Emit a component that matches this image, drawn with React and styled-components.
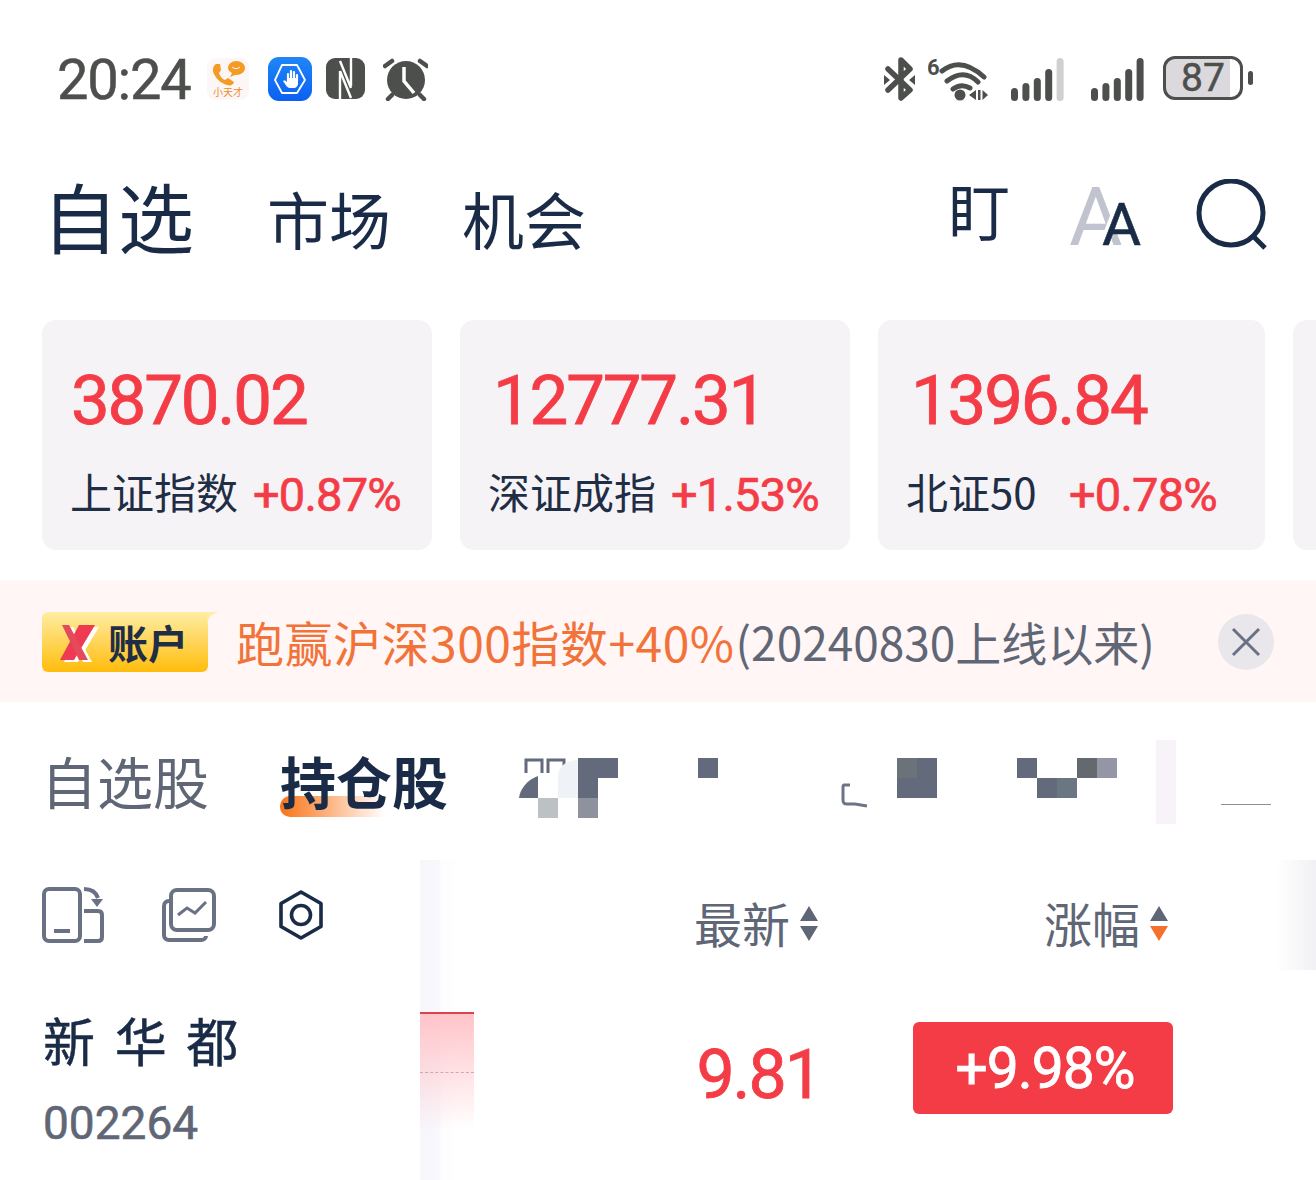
import React from 'react';
import styled, { createGlobalStyle } from 'styled-components';

const CJK = `"Noto Sans CJK SC", "Noto Sans", sans-serif`;
const NUM = `Roboto, "Noto Sans CJK SC", sans-serif`;
const INK = '#1a2b47';
const GREY = '#5f6676';
const RED = '#f43c47';
const STATUS = '#4d4f4d';

const GlobalStyle = createGlobalStyle`
  html, body {
    margin: 0;
    padding: 0;
    background: #fff;
  }
`;

const Screen = styled.div`
  width: 1316px;
  height: 1180px;
  overflow: hidden;
  background: #fff;
  font-family: ${CJK};
  color: ${INK};
`;

const StatusBar = styled.div`
  height: 160px;
  display: flex;
  align-items: center;
  padding: 0 63px 0 57px;
  box-sizing: border-box;
`;

const Time = styled.div`
  font-family: ${NUM};
  font-size: 56px;
  line-height: 60px;
  letter-spacing: -1.2px;
  -webkit-text-stroke: 0.5px ${STATUS};
  color: ${STATUS};
  margin-right: 17px;
`;

const StatusIcon = styled.svg`
  display: block;
  flex: none;
  margin-left: ${(p) => p.$ml || 0}px;
  margin-bottom: 3px;
`;

const Spacer = styled.div`
  flex: 1;
`;

const Battery = styled.div`
  width: 80px;
  height: 44px;
  margin: 0 0 4px 17px;
  box-sizing: border-box;
  border: 3px solid ${STATUS};
  border-radius: 12px;
  background: linear-gradient(to right, #dcd9de 87%, #fff 87%);
  font-family: ${NUM};
  font-size: 39px;
  -webkit-text-stroke: 0.5px ${STATUS};
  line-height: 38px;
  text-align: center;
  color: ${STATUS};
`;

const BatteryCap = styled.div`
  width: 5px;
  height: 14px;
  margin: 0 0 4px 5px;
  border-radius: 3px;
  background: ${STATUS};
`;

const NavBar = styled.div`
  height: 110px;
  margin-bottom: 50px;
  display: flex;
  align-items: center;
  padding: 0 48px 0 50px;
`;

const NavItem = styled.div`
  font-size: ${(p) => (p.$active ? 76 : 62)}px;
  line-height: 90px;
  margin-right: ${(p) => p.$gap}px;
  margin-left: ${(p) => (p.$active ? -8 : 0)}px;
  padding-top: ${(p) => (p.$active ? 0 : 6)}px;
`;

const WatchGlyph = styled.div`
  font-size: 62px;
  line-height: 70px;
  margin-right: 60px;
  margin-top: -12px;
`;

const FontToggle = styled.div`
  position: relative;
  width: 70px;
  height: 70px;
  margin-right: 56px;
  font-family: ${NUM};
`;

const BackA = styled.span`
  position: absolute;
  left: -1px;
  top: -4px;
  font-size: 82px;
  line-height: 82px;
  color: #c1c3ce;
`;

const FrontA = styled.span`
  position: absolute;
  left: 32px;
  top: 15px;
  font-size: 60px;
  line-height: 60px;
  color: ${INK};
  -webkit-text-stroke: 0.5px ${INK};
  text-shadow: -3px 0 0 #fff, -3px -3px 0 #fff, 0 -3px 0 #fff;
`;

const CardRow = styled.div`
  display: flex;
  gap: 28px;
  padding-left: 42px;
  margin-bottom: 30px;
`;

const Card = styled.div`
  flex: none;
  width: ${(p) => p.$width}px;
  height: 230px;
  box-sizing: border-box;
  padding: 46px 0 0 28px;
  background: #f6f3f7;
  border-radius: 14px;
`;

const CardValue = styled.div`
  font-family: ${NUM};
  font-size: 69px;
  line-height: 70px;
  letter-spacing: -2.2px;
  -webkit-text-stroke: 0.8px ${RED};
  color: ${RED};
  margin-left: ${(p) => p.$shift || 0}px;
`;

const CardFoot = styled.div`
  display: flex;
  align-items: center;
  margin-top: 30px;
  height: 50px;
`;

const CardLabel = styled.div`
  font-size: 42px;
  line-height: 44px;
  color: #1f2d45;
  width: ${(p) => p.$width || 165}px;
  white-space: nowrap;
`;

const CardChange = styled.div`
  font-family: ${NUM};
  font-size: 47px;
  line-height: 50px;
  letter-spacing: -0.8px;
  -webkit-text-stroke: 0.7px ${RED};
  color: ${RED};
  margin-left: 18px;
  padding-top: 8px;
`;

const Banner = styled.div`
  height: 122px;
  box-sizing: border-box;
  padding: 2px 0 0 42px;
  background: #fff6f5;
  display: flex;
  align-items: center;
`;

const Badge = styled.div`
  position: relative;
  width: 166px;
  height: 60px;
  border-radius: 6px 0 6px 6px;
  background: linear-gradient(to bottom, #ffeda3, #ffbd0c);
  display: flex;
  align-items: center;
  padding-left: 18px;
  box-sizing: border-box;
  font-size: 40px;
  font-weight: 700;
  color: #1f2d45;
  margin-right: 28px;

  &::after {
    content: '';
    position: absolute;
    right: -11px;
    top: 0;
    width: 12px;
    height: 12px;
    background: radial-gradient(circle at 100% 100%, transparent 11px, #ffeda3 12px);
  }
`;

const BadgeMark = styled.svg`
  display: block;
  flex: none;
  margin-right: 8px;
`;

const Promo = styled.div`
  font-size: 48px;
  line-height: 60px;
  letter-spacing: 0.5px;
  color: #f2733a;
  white-space: nowrap;
  margin-top: -3px;
`;

const PromoNote = styled.div`
  font-size: 46px;
  line-height: 60px;
  color: ${GREY};
  white-space: nowrap;
  margin: -3px 0 0 1px;
`;

const CloseButton = styled.div`
  position: absolute;
  left: 1218px;
  width: 56px;
  height: 56px;
  border-radius: 50%;
  background: #e9e7ec;
  display: flex;
  align-items: center;
  justify-content: center;
`;

const TabRow = styled.div`
  height: 84px;
  margin: 38px 0 36px;
  display: flex;
  align-items: center;
  padding-left: 41px;
`;

const Tab = styled.div`
  position: relative;
  width: ${(p) => p.$width}px;
  font-size: 56px;
  line-height: 80px;
  padding-bottom: 4px;
  white-space: nowrap;
  font-weight: ${(p) => (p.$active ? 700 : 400)};
  color: ${(p) => (p.$active ? INK : GREY)};
  z-index: 0;

  ${(p) =>
    p.$active &&
    `&::after {
      content: '';
      position: absolute;
      left: 0;
      bottom: 7px;
      width: 105px;
      height: 21px;
      border-radius: 10px 0 0 10px;
      background: linear-gradient(to right, #f97316, rgba(249, 115, 22, 0));
      z-index: -1;
    }`}
`;

const Table = styled.div`
  position: relative;
`;

const HeaderRow = styled.div`
  display: grid;
  grid-template-columns: 420px 398px 350px;
  height: 110px;
`;

const ToolCell = styled.div`
  display: flex;
  align-items: center;
  padding: 0 0 0 42px;
  height: 110px;
`;

const ToolIcon = styled.svg`
  display: block;
  flex: none;
  margin-right: ${(p) => p.$mr || 0}px;
`;

const HeadCell = styled.div`
  display: flex;
  align-items: center;
  justify-content: flex-end;
  gap: 10px;
  padding-top: 14px;
  font-size: 48px;
  color: ${GREY};
`;

const SortArrows = styled.div`
  display: flex;
  flex-direction: column;
  gap: 5px;
  padding-top: 2px;
`;

const Arrow = styled.div`
  width: 0;
  height: 0;
  border-left: 9px solid transparent;
  border-right: 9px solid transparent;
  ${(p) => (p.$down ? 'border-top' : 'border-bottom')}: 15px solid ${(p) => p.$color};
`;

const RightFade = styled.div`
  position: absolute;
  right: 0;
  top: 0;
  width: 40px;
  height: 110px;
  background: linear-gradient(to right, rgba(241, 240, 244, 0), #f1f0f4);
`;

const FrozenFade = styled.div`
  position: absolute;
  left: 420px;
  top: 0;
  width: 40px;
  height: 320px;
  background: linear-gradient(to right, #f6f6fb 0, #f9f8fc 48%, #fdfcfe 55%, #fff);
`;

const StockRow = styled.div`
  display: grid;
  grid-template-columns: 420px 398px 355px;
  height: 210px;
`;

const NameCell = styled.div`
  padding: 35px 0 0 43px;
`;

const StockName = styled.div`
  font-size: 52px;
  line-height: 70px;
  word-spacing: 8px;
  -webkit-text-stroke: 0.5px ${INK};
  color: ${INK};
`;

const StockCode = styled.div`
  font-family: ${NUM};
  font-size: 46px;
  line-height: 50px;
  -webkit-text-stroke: 0.6px ${GREY};
  color: ${GREY};
  margin-top: 23px;
`;

const PriceCell = styled.div`
  display: flex;
  justify-content: space-between;
  align-items: flex-start;
`;

const Spark = styled.div`
  position: relative;
  z-index: 1;
  width: 54px;
  height: 128px;
  margin-top: 42px;
  border-top: 2px solid #d9434e;
  box-sizing: border-box;
  background: linear-gradient(to bottom, #ffc4c9, rgba(255, 240, 242, 0) 92%);
`;

const SparkBase = styled.div`
  position: absolute;
  left: 0;
  right: 0;
  top: 58px;
  border-top: 1px dashed #d9a3aa;
`;

const Price = styled.div`
  position: relative;
  font-family: ${NUM};
  font-size: 68px;
  line-height: 70px;
  letter-spacing: -2px;
  -webkit-text-stroke: 0.8px ${RED};
  color: ${RED};
  margin: 70px -3px 0 0;
`;

const ChangeCell = styled.div`
  position: relative;
  display: flex;
  justify-content: flex-end;
  padding-top: 52px;
`;

const ChangeBadge = styled.div`
  width: 260px;
  height: 92px;
  box-sizing: border-box;
  padding: 2px 0 0 4px;
  border-radius: 6px;
  background: ${RED};
  color: #fff;
  font-family: ${NUM};
  font-size: 57px;
  -webkit-text-stroke: 0.8px #fff;
  line-height: 90px;
  text-align: center;
  letter-spacing: -1px;
`;

const Mosaic = styled.svg`
  display: block;
  flex: none;
`;

function SignalBars({ ml, lastDim }) {
  const heights = [13, 18, 23, 32, 43];
  return (
    <StatusIcon $ml={ml} width="55" height="44" viewBox="0 0 55 44">
      {heights.map((h, i) => (
        <rect
          key={i}
          x={i * 11.4}
          y={44 - h}
          width="7"
          height={h}
          rx="3.5"
          fill={lastDim && i === 4 ? '#d0d0d2' : STATUS}
        />
      ))}
    </StatusIcon>
  );
}

const statusIcons = {
  app: (
    <StatusIcon width="42" height="42" viewBox="0 0 42 42">
      <rect width="42" height="42" rx="9" fill="#fcf7f6" />
      <path d="M9 6c-3 2-4 6-2 10 3 6 7 9 13 11 4 1 6 0 7-3l-6-4-3 2c-3-1-5-4-6-7l2-3-1-6z" fill="#f59a23" />
      <path d="M29 3c5 0 9 3 9 7s-4 7-9 7h-1l-5 2 2-4c-2-1-4-3-4-5 0-4 4-7 8-7z" fill="#f59a23" />
      <path d="M25 9c2 2 6 2 8 0" fill="none" stroke="#fff" strokeWidth="1" />
      <text x="21" y="38" fontSize="10" textAnchor="middle" fill="#ee8a2a" fontFamily={CJK}>小天才</text>
    </StatusIcon>
  ),
  shield: (
    <StatusIcon $ml={19} width="44" height="44" viewBox="0 0 44 44">
      <defs>
        <linearGradient id="shieldBlue" x1="0" y1="0" x2="0" y2="1">
          <stop offset="0" stopColor="#1f86f7" />
          <stop offset="1" stopColor="#0b60f2" />
        </linearGradient>
      </defs>
      <rect width="44" height="44" rx="11" fill="url(#shieldBlue)" />
      <path d="M14 8h15l8 15-8 13H14L7 23z" fill="none" stroke="#fff" strokeWidth="1.800" strokeLinejoin="round" />
      <path d="M20 24v-7M23 23v-9M26 23v-8M29 24v-6" fill="none" stroke="#fff" strokeWidth="2.200" strokeLinecap="round" />
      <path d="M15 24c2-1 3 0 4 1v-4h11v6c0 2-2 4-4 4h-4c-3 0-4-3-7-7z" fill="#fff" />
    </StatusIcon>
  ),
  nfc: (
    <StatusIcon $ml={14} width="39" height="42" viewBox="0 0 39 42">
      <rect width="39" height="41" rx="9" fill={STATUS} />
      <path d="M14 13v28M25 0v28M14 3l11 27M14 13l11 27" stroke="#fff" strokeWidth="2.400" fill="none" />
    </StatusIcon>
  ),
  alarm: (
    <StatusIcon $ml={18} width="45" height="44" viewBox="0 0 45 44">
      <circle cx="23" cy="23" r="19" fill={STATUS} />
      <path d="M21 10v14l10 12" stroke="#fff" strokeWidth="3.500" fill="none" />
      <path d="M2 9l7-5M44 9l-7-5M9 38l-4 4M37 38l4 4" stroke={STATUS} strokeWidth="4.500" strokeLinecap="round" />
    </StatusIcon>
  ),
  bluetooth: (
    <StatusIcon width="31" height="44" viewBox="0 0 31 44">
      <path d="M4 12l22 21-9 8V3l9 9L4 33" fill="none" stroke={STATUS} strokeWidth="5.500" strokeLinejoin="round" strokeLinecap="round" />
      <path d="M0 18l6 5-6 5zM31 18l-6 5 6 5z" fill={STATUS} />
    </StatusIcon>
  ),
  wifi: (
    <StatusIcon $ml={13} width="60" height="50" viewBox="0 -6 60 50">
      <text x="-1" y="15" fontSize="22" fontWeight="700" fill={STATUS} fontFamily={NUM}>6</text>
      <path d="M14 11Q33-4 56 17M19 21Q36 8 50 22M25 29Q33 23 42 28" fill="none" stroke={STATUS} strokeWidth="5" strokeLinecap="round" />
      <circle cx="32" cy="35" r="5.500" fill={STATUS} />
      <path d="M48 30v10l-7-5zM50 30h2.500v10H50zM54.500 30l5.500 5-5.500 5z" fill={STATUS} />
    </StatusIcon>
  ),
};

function App() {
  return (
    <Screen>
      <GlobalStyle />
      <StatusBar>
        <Time>20:24</Time>
        {statusIcons.app}
        {statusIcons.shield}
        {statusIcons.nfc}
        {statusIcons.alarm}
        <Spacer />
        {statusIcons.bluetooth}
        {statusIcons.wifi}
        <SignalBars ml={23} lastDim />
        <SignalBars ml={25} />
        <Battery>87</Battery>
        <BatteryCap />
      </StatusBar>

      <NavBar>
        <NavItem $active $gap={73}>自选</NavItem>
        <NavItem $gap={71}>市场</NavItem>
        <NavItem $gap={0}>机会</NavItem>
        <Spacer />
        <WatchGlyph>盯</WatchGlyph>
        <FontToggle>
          <BackA>A</BackA>
          <FrontA>A</FrontA>
        </FontToggle>
        <svg width="72" height="72" viewBox="0 0 72 72">
          <circle cx="35" cy="34" r="32" fill="none" stroke={INK} strokeWidth="5" />
          <path d="M57 57l12 12" stroke={INK} strokeWidth="5" />
        </svg>
      </NavBar>

      <CardRow>
        <Card $width={390}>
          <CardValue $shift={1}>3870.02</CardValue>
          <CardFoot>
            <CardLabel>上证指数</CardLabel>
            <CardChange>+0.87%</CardChange>
          </CardFoot>
        </Card>
        <Card $width={390}>
          <CardValue $shift={5}>12777.31</CardValue>
          <CardFoot>
            <CardLabel>深证成指</CardLabel>
            <CardChange>+1.53%</CardChange>
          </CardFoot>
        </Card>
        <Card $width={387}>
          <CardValue $shift={5}>1396.84</CardValue>
          <CardFoot>
            <CardLabel $width={145}>北证50</CardLabel>
            <CardChange>+0.78%</CardChange>
          </CardFoot>
        </Card>
        <Card $width={200} />
      </CardRow>

      <Banner>
        <Badge>
          <BadgeMark width="40" height="40" viewBox="0 0 40 40">
            <g fill="#fff" transform="translate(4 2)">
              <path d="M19 3h16L14 38H0z" />
              <path d="M2 3h7l19 35h-9z" />
            </g>
            <path d="M19 3h16L14 38H0z" fill="#ee3b52" />
            <path d="M2 3h7l19 35h-9z" fill="#e5495c" />
          </BadgeMark>
          账户
        </Badge>
        <Promo>跑赢沪深300指数+40%</Promo>
        <PromoNote>(20240830上线以来)</PromoNote>
        <CloseButton>
          <svg width="30" height="30" viewBox="0 0 30 30">
            <path d="M2 2l26 26M28 2L2 28" stroke="#6a7184" strokeWidth="3" />
          </svg>
        </CloseButton>
      </Banner>

      <TabRow>
        <Tab $width={239}>自选股</Tab>
        <Tab $active $width={236}>持仓股</Tab>
        <Mosaic width="800" height="84" viewBox="516 740 800 84">
          <path d="M526 773v-13h16v13M548 773v-13h16v13" fill="none" stroke="#636a7b" strokeWidth="3" />
          <path d="M538 776v22h-19c1-9 8-18 19-22z" fill="#636a7b" />
          <path d="M558 798v-22c0-9 8-16 20-16v38z" fill="#eff2f7" />
          <rect x="538" y="798" width="20" height="20" fill="#bcc1c4" />
          <path d="M578 758h40v20h-20v20h-20z" fill="#636a7b" />
          <rect x="578" y="798" width="20" height="20" fill="#8d929d" />
          <rect x="698" y="758" width="20" height="20" fill="#636a7b" />
          <path d="M850 785h-6c-1 0-1 1-1 2v13c0 3 1 4 4 4h8l12 2" fill="none" stroke="#6d7487" strokeWidth="3" />
          <rect x="897" y="758" width="40" height="40" fill="#636a7b" />
          <rect x="897" y="758" width="20" height="20" fill="#6c7279" />
          <rect x="1017" y="758" width="20" height="20" fill="#636a7b" />
          <rect x="1037" y="778" width="20" height="20" fill="#636a7b" />
          <rect x="1057" y="778" width="20" height="20" fill="#6a7681" />
          <rect x="1077" y="758" width="20" height="20" fill="#63696f" />
          <rect x="1097" y="758" width="20" height="20" fill="#9496a5" />
          <rect x="1156" y="740" width="20" height="84" fill="#f7f3f8" />
          <rect x="1221" y="804" width="50" height="1" fill="#8d8f94" />
        </Mosaic>
      </TabRow>

      <Table>
        <FrozenFade />
        <HeaderRow>
          <ToolCell>
            <ToolIcon $mr={58} width="62" height="56" viewBox="0 0 62 56">
              <rect x="2" y="2" width="36" height="52" rx="5" fill="none" stroke="#6a7184" strokeWidth="4" />
              <path d="M12 44h16" stroke="#6a7184" strokeWidth="4" />
              <path d="M42 2c8 0 12 3 14 9M42 24h14c3 0 4 2 4 4v22c0 2-1 4-4 4H42" fill="none" stroke="#6a7184" strokeWidth="4" />
              <path d="M49 12h12l-6 8z" fill="#6a7184" />
            </ToolIcon>
            <ToolIcon $mr={62} width="54" height="54" viewBox="0 0 54 54">
              <path d="M9 13H7c-3 0-5 2-5 5v29c0 3 2 5 5 5h32c3 0 5-2 5-4" fill="none" stroke="#6a7184" strokeWidth="4" />
              <rect x="9" y="2" width="43" height="40" rx="6" fill="none" stroke="#6a7184" strokeWidth="4" />
              <path d="M16 27l9-7 8 5 11-11" fill="none" stroke="#6a7184" strokeWidth="3" />
            </ToolIcon>
            <ToolIcon width="46" height="50" viewBox="0 0 46 50">
              <path d="M23 2l20 11.500v23L23 48 3 36.500v-23z" fill="none" stroke={INK} strokeWidth="3.600" strokeLinejoin="round" />
              <circle cx="23" cy="25" r="9.500" fill="none" stroke={INK} strokeWidth="3.600" />
            </ToolIcon>
          </ToolCell>
          <HeadCell>
            最新
            <SortArrows>
              <Arrow $color={GREY} />
              <Arrow $down $color={GREY} />
            </SortArrows>
          </HeadCell>
          <HeadCell>
            涨幅
            <SortArrows>
              <Arrow $color={GREY} />
              <Arrow $down $color="#f4702f" />
            </SortArrows>
          </HeadCell>
        </HeaderRow>
        <RightFade />

        <StockRow>
          <NameCell>
            <StockName>新 华 都</StockName>
            <StockCode>002264</StockCode>
          </NameCell>
          <PriceCell>
            <Spark>
              <SparkBase />
            </Spark>
            <Price>9.81</Price>
          </PriceCell>
          <ChangeCell>
            <ChangeBadge>+9.98%</ChangeBadge>
          </ChangeCell>
        </StockRow>
      </Table>
    </Screen>
  );
}

export default App;
